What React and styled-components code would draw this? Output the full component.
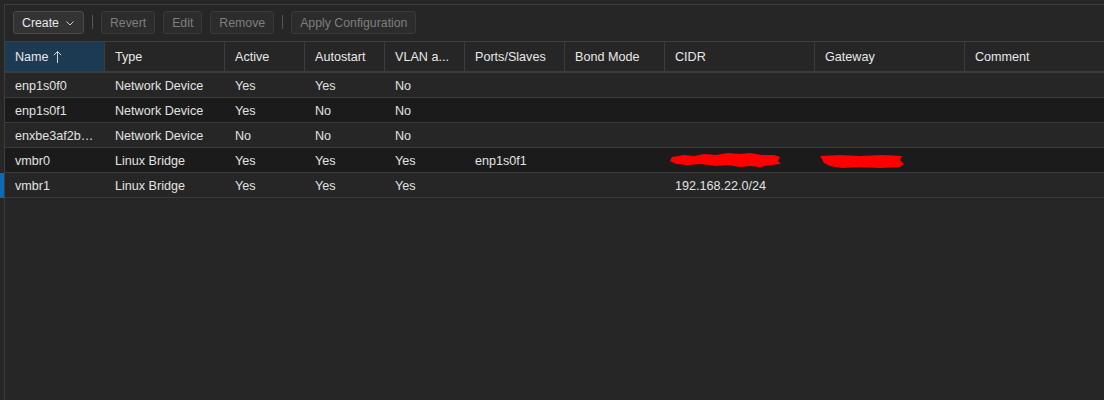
import React from 'react';
import styled, { createGlobalStyle } from 'styled-components';

const GlobalStyle = createGlobalStyle`
  html, body {
    margin: 0;
    padding: 0;
    background: #262626;
    font-family: "Liberation Sans", Arial, sans-serif;
    font-size: 12.6px;
    color: #e4e4e4;
  }
`;

const Page = styled.div`
  display: flex;
  height: 400px;
  padding-top: 4px;
  box-sizing: border-box;
  background: #262626;
`;

const Gutter = styled.div`
  width: 4px;
  flex: none;
`;

const Panel = styled.div`
  flex: 1;
  border-left: 1px solid #3e3e3e;
  border-top: 1px solid #3e3e3e;
  display: flex;
  flex-direction: column;
  min-width: 0;
`;

const Toolbar = styled.div`
  display: flex;
  align-items: flex-start;
  gap: 8px;
  height: 30px;
  padding: 6px 8px 0;
  border-bottom: 1px solid #3e3e3e;
`;

const Button = styled.button`
  height: 23px;
  box-sizing: border-box;
  padding: 0 8px;
  display: flex;
  align-items: center;
  gap: 6px;
  font-family: inherit;
  font-size: 12.3px;
  border-radius: 3px;
  border: 1px solid ${p => (p.disabled ? '#3a3a3a' : '#4a4a4a')};
  background: ${p => (p.disabled ? '#2c2c2c' : '#333333')};
  color: ${p => (p.disabled ? '#7e7e7e' : '#e8e8e8')};
`;

const Separator = styled.span`
  width: 1px;
  height: 14px;
  margin-top: 4px;
  background: #555;
`;

const Grid = styled.div`
  display: flex;
  flex-direction: column;
`;

const HeaderRow = styled.div`
  display: flex;
  height: 29px;
  border-bottom: 2px solid #3c3c3c;
`;

const HeaderCell = styled.div`
  width: ${p => p.w}px;
  flex: ${p => (p.w ? 'none' : '1')};
  box-sizing: border-box;
  padding: 0 10px;
  display: flex;
  align-items: center;
  gap: 4px;
  border-right: ${p => (p.w ? '1px solid #3c3c3c' : 'none')};
  background: ${p => (p.sorted ? '#1c3a52' : 'transparent')};
  color: #e8e8e8;
  white-space: nowrap;
`;

const Row = styled.div`
  position: relative;
  display: flex;
  height: 24px;
  border-bottom: 1px solid #3a3a3a;
  background: ${p => (p.odd ? '#1b1b1b' : '#262626')};

  &::before {
    content: '';
    display: ${p => (p.marked ? 'block' : 'none')};
    position: absolute;
    left: -5px;
    top: 0;
    bottom: -1px;
    width: 4px;
    background: #0b6bb5;
  }
`;

const Cell = styled.div`
  width: ${p => p.w}px;
  flex: ${p => (p.w ? 'none' : '1')};
  box-sizing: border-box;
  padding: 1px 10px 0;
  display: flex;
  align-items: center;
  white-space: nowrap;
  color: #e2e2e2;
`;

const RedactMark = styled.svg`
  margin-left: -5px;
  margin-top: ${p => p.dy || 0}px;
`;

const columns = [
  { key: 'name', title: 'Name', w: 100 },
  { key: 'type', title: 'Type', w: 120 },
  { key: 'active', title: 'Active', w: 80 },
  { key: 'auto', title: 'Autostart', w: 80 },
  { key: 'vlan', title: 'VLAN a...', w: 80 },
  { key: 'ports', title: 'Ports/Slaves', w: 100 },
  { key: 'bond', title: 'Bond Mode', w: 100 },
  { key: 'cidr', title: 'CIDR', w: 150 },
  { key: 'gw', title: 'Gateway', w: 150 },
  { key: 'comment', title: 'Comment', w: 0 },
];

const Redact1 = () => (
  <RedactMark width="112" height="17" viewBox="0 0 112 17">
    <path
      fill="#ff0000"
      d="M2 5 L14 3 L24 4 L34 2 L46 3 L58 1 L70 2 L80 1 L92 3 L104 3 L110 5 L108 9 L111 12 L100 13 L90 15 L80 14 L70 15 L58 13 L46 14 L30 12 L18 13 L6 12 L0 9 Z"
    />
  </RedactMark>
);

const Redact2 = () => (
  <RedactMark width="86" height="15" viewBox="0 0 86 15" dy={2}>
    <path
      fill="#ff0000"
      d="M0 2 L20 1 L40 2 L62 1 L82 2 L80 6 L84 10 L80 13 L60 14 L40 13 L22 14 L10 12 L4 9 L2 5 Z"
    />
  </RedactMark>
);

const rows = [
  { name: 'enp1s0f0', type: 'Network Device', active: 'Yes', auto: 'Yes', vlan: 'No' },
  { name: 'enp1s0f1', type: 'Network Device', active: 'Yes', auto: 'No', vlan: 'No' },
  { name: 'enxbe3af2b…', type: 'Network Device', active: 'No', auto: 'No', vlan: 'No' },
  { name: 'vmbr0', type: 'Linux Bridge', active: 'Yes', auto: 'Yes', vlan: 'Yes', ports: 'enp1s0f1', cidr: <Redact1 />, gw: <Redact2 /> },
  { name: 'vmbr1', type: 'Linux Bridge', active: 'Yes', auto: 'Yes', vlan: 'Yes', cidr: '192.168.22.0/24', marked: true },
];

const ChevronDown = () => (
  <svg width="10" height="10" viewBox="0 0 10 10">
    <path d="M1.5 3.5 L5 7 L8.5 3.5" fill="none" stroke="#cfcfcf" strokeWidth="1" />
  </svg>
);

const SortArrow = () => (
  <svg width="9" height="14" viewBox="0 0 9 14">
    <path d="M4.5 1.5 V13 M0.8 5.2 L4.5 1.5 L8.2 5.2" fill="none" stroke="#cfd6dc" strokeWidth="1" />
  </svg>
);

export default function App() {
  return (
    <>
      <GlobalStyle />
      <Page>
        <Gutter />
        <Panel>
          <Toolbar>
            <Button>
              Create <ChevronDown />
            </Button>
            <Separator />
            <Button disabled>Revert</Button>
            <Button disabled>Edit</Button>
            <Button disabled>Remove</Button>
            <Separator />
            <Button disabled>Apply Configuration</Button>
          </Toolbar>
          <Grid>
            <HeaderRow>
              {columns.map(c => (
                <HeaderCell key={c.key} w={c.w} sorted={c.key === 'name'}>
                  {c.title}
                  {c.key === 'name' && <SortArrow />}
                </HeaderCell>
              ))}
            </HeaderRow>
            {rows.map((r, i) => (
              <Row key={r.name} odd={i % 2 === 1} marked={r.marked}>
                {columns.map(c => (
                  <Cell key={c.key} w={c.w}>
                    {r[c.key]}
                  </Cell>
                ))}
              </Row>
            ))}
          </Grid>
        </Panel>
      </Page>
    </>
  );
}
